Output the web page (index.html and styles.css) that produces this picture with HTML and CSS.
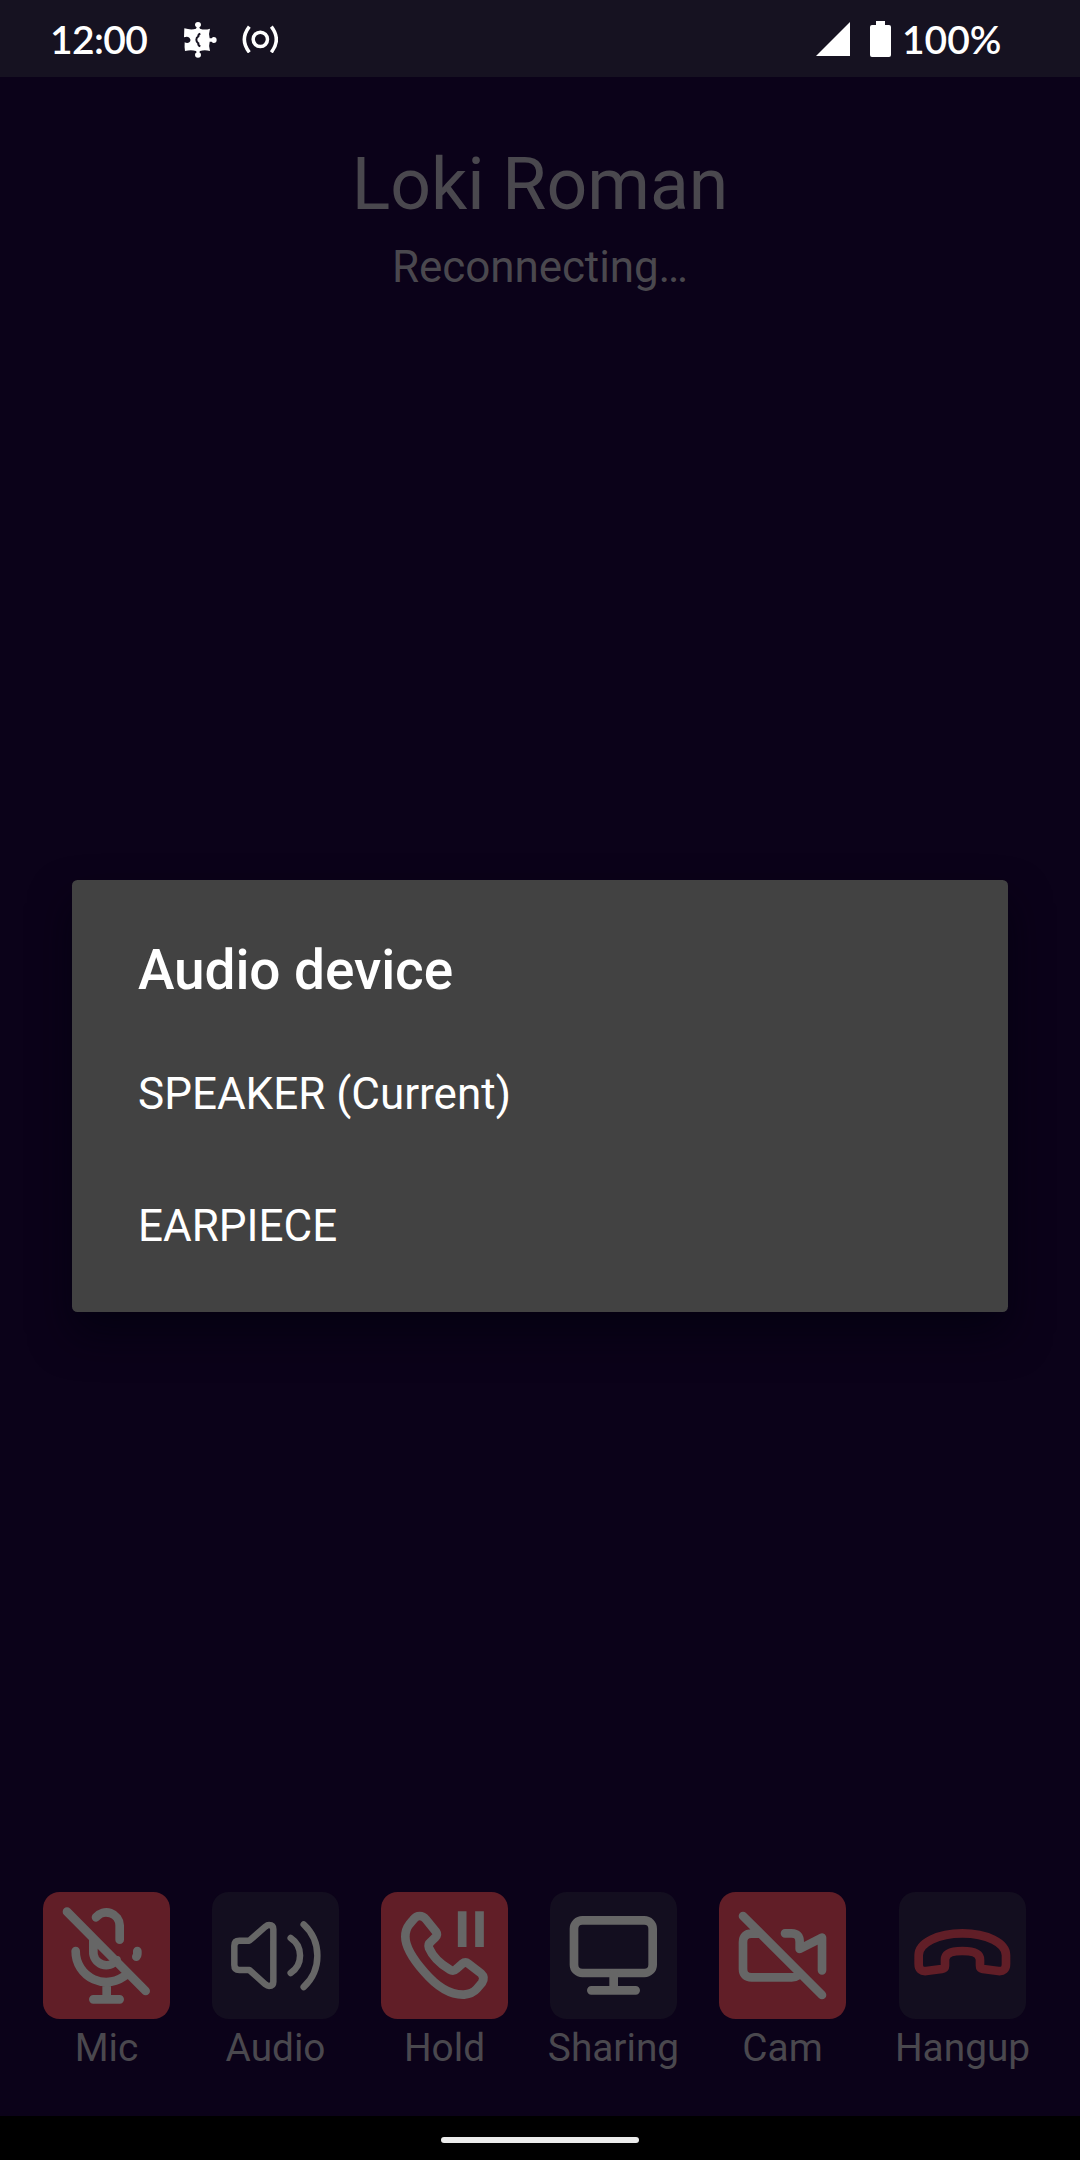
FILE: index.html
```html
<!DOCTYPE html>
<html lang="en">
<head>
<meta charset="utf-8">
<title>Call</title>
<link rel="stylesheet" href="styles.css">
</head>
<body>
<div class="screen">
  <header class="status-bar">
    <span class="clock">12:00</span>
    <svg class="puzzle" viewBox="549 66 102 108"><path d="M553 85Q574 91 588 86L590 82Q585 79 585 75A9 9 0 0 1 603 75Q603 79 598 82L600 86Q614 91 630 86Q625 101 629 115L635 115Q638 111 641 111A8 8 0 0 1 641 129Q638 129 635 125L629 125Q625 138 630 153Q614 149 600 153L598 157Q603 160 603 164A9 9 0 0 1 585 164Q585 160 590 157L588 153Q574 149 555 153Q553 141 554 127Q562 131 568 127Q575 120 568 113Q562 108 552 112Z"/><path class="cut" d="M601 101Q594 103 595 109Q589 112 589 119Q589 126 595 130Q594 137 601 139"/></svg>
    <svg class="hotspot" viewBox="726 75 108 84"><circle cx="781" cy="118" r="21.500"/><path d="M748 80Q718 119 748 157M814 80Q844 119 814 157"/></svg>
    <span class="spacer"></span>
    <svg class="signal" viewBox="0 0 35 35"><path d="M35 0V35H0Z"/></svg>
    <svg class="battery" viewBox="0 0 21 36"><path d="M6 0H15V4H19Q21 4 21 6V34Q21 36 19 36H2Q0 36 0 34V6Q0 4 2 4H6Z"/></svg>
    <span class="percent">100%</span>
  </header>

  <main class="call">
    <h1 class="caller">Loki Roman</h1>
    <p class="state">Reconnecting…</p>

    <nav class="controls">
      <div class="control">
        <div class="tile active"><svg viewBox="0 0 381 381"><path d="M72 59L308 297M159 76A40 40 0 0 1 230 100V143M151 139V178A39 39 0 0 0 221 204M98 177A92 92 0 0 0 252 246M283 177V187Q283 191 280 194M191 271V320M151 322H230"/></svg></div>
        <span class="label">Mic</span>
      </div>
      <div class="control">
        <div class="tile"><svg class="thin" viewBox="0 0 381 381"><path d="M82 146H112L160 104Q166 99 171 99Q184 99 184 112V269Q184 282 171 282Q166 282 160 277L112 234H82Q67 234 67 219V161Q67 146 82 146ZM236 138A63 63 0 0 1 236 243M275 97A128 128 0 0 1 275 285"/></svg></div>
        <span class="label">Audio</span>
      </div>
      <div class="control">
        <div class="tile active"><svg viewBox="0 0 381 381"><path d="M116 72Q127 72 135 82L165 119Q171 128 163 136L149 150Q140 157 144 168Q160 205 205 232Q217 240 226 231L243 216Q253 208 262 215L300 244Q313 256 303 272L287 291Q275 305 249 308Q190 310 130 240Q73 175 73 134Q73 112 85 97L97 83Q105 72 116 72Z"/><path class="bars" d="M243.500 58V165M295.500 58V165"/></svg></div>
        <span class="label">Hold</span>
      </div>
      <div class="control">
        <div class="tile"><svg viewBox="0 0 381 381"><rect x="72" y="85" width="236" height="158" rx="25"/><path d="M191 245V293M124 295H257"/></svg></div>
        <span class="label">Sharing</span>
      </div>
      <div class="control">
        <div class="tile active"><svg viewBox="0 0 381 381"><path d="M72 72L309 309M118 125H98Q72 125 72 151V230Q72 256 98 256H218Q230 256 240 249M198 124H218Q242 124 242 150V171L309 137V235"/></svg></div>
        <span class="label">Cam</span>
      </div>
      <div class="control hangup">
        <div class="tile"><svg viewBox="0 0 381 381"><path d="M59 190C59 152 118 124 190 124C262 124 321 152 321 190V216Q321 239 298 237L252 231Q243 229 243 221V203Q243 177 190 177Q138 177 138 203V221Q138 229 128 231L82 237Q59 239 59 216Z"/></svg></div>
        <span class="label">Hangup</span>
      </div>
    </nav>
  </main>

  <footer class="nav-bar"><span class="pill"></span></footer>

  <section class="dialog">
    <h2 class="dialog-title">Audio device</h2>
    <div class="option">SPEAKER (Current)</div>
    <div class="option">EARPIECE</div>
  </section>
</div>
</body>
</html>
```
FILE: styles.css
```css
* { box-sizing: border-box; }
body { margin: 0; font-family: Roboto, sans-serif; background: #0b0219; }
.screen {
  position: relative;
  width: 1080px;
  height: 2160px;
  display: flex;
  flex-direction: column;
  background: #0b0219;
  overflow: hidden;
}
.status-bar {
  height: 77px;
  flex: none;
  display: flex;
  align-items: center;
  padding: 0 78px 0 50px;
  background: #161221;
  color: #fff;
  font: 600 39px/78px Lato, sans-serif;
}
.status-bar svg { fill: #fff; flex: none; }
.clock { width: 133px; letter-spacing: -0.6px; }
.puzzle { width: 34px; height: 36px; margin-top: 3px; }
.puzzle .cut { fill: none; stroke: #161221; stroke-width: 6; }
.status-bar .hotspot { width: 36px; height: 28px; margin: 1px 0 0 25px; fill: none; stroke: #fff; stroke-width: 10.500; }
.spacer { flex: 1; }
.signal { width: 34px; height: 34px; margin-right: 20px; }
.battery { width: 21px; height: 36px; margin-right: 11px; }
.percent { width: 100px; }

.call { flex: 1; display: flex; flex-direction: column; align-items: center; }
.caller { margin: 66px 0 0; font-size: 71.500px; line-height: 84px; font-weight: 400; color: #4a484e; }
.state { margin: 14px 0 0; font-size: 44px; line-height: 52px; letter-spacing: -0.1px; color: #4a484e; }
.controls { width: 100%; margin-top: auto; padding: 0 43px 45px; display: flex; }
.control { width: 127px; margin-right: 42px; display: flex; flex-direction: column; align-items: center; flex: none; }
.control.hangup { margin: 0 0 0 11px; }
.tile { width: 127px; height: 127px; border-radius: 16.500px; background: #130e1f; }
.tile.active { background: #611e27; }
.tile svg { display: block; width: 127px; height: 127px; fill: none; stroke: #666; stroke-width: 26; stroke-linecap: round; stroke-linejoin: round; }
.tile svg.thin { stroke-width: 19.500; }
.tile .bars { stroke-linecap: butt; }
.hangup .tile svg { stroke: #611e27; }
.label { margin-top: 6px; font-size: 38.800px; line-height: 46px; color: #4a484e; white-space: nowrap; }

.nav-bar { height: 44px; flex: none; background: #000; display: flex; justify-content: center; padding-top: 21px; }
.pill { width: 198px; height: 6px; border-radius: 3px; background: #ececec; }

.dialog {
  position: absolute;
  left: 72px;
  top: 880px;
  width: 936px;
  height: 432px;
  padding: 49px 66px 20px;
  border-radius: 5.500px;
  background: #424242;
  color: #fff;
  box-shadow: 0 22px 40px rgba(2, 0, 14, 0.6);
}
.dialog-title { margin: 0 0 17px; font-size: 55px; line-height: 82px; font-weight: 500; letter-spacing: -0.1px; }
.option { height: 132px; font-size: 44px; line-height: 132px; }
```
